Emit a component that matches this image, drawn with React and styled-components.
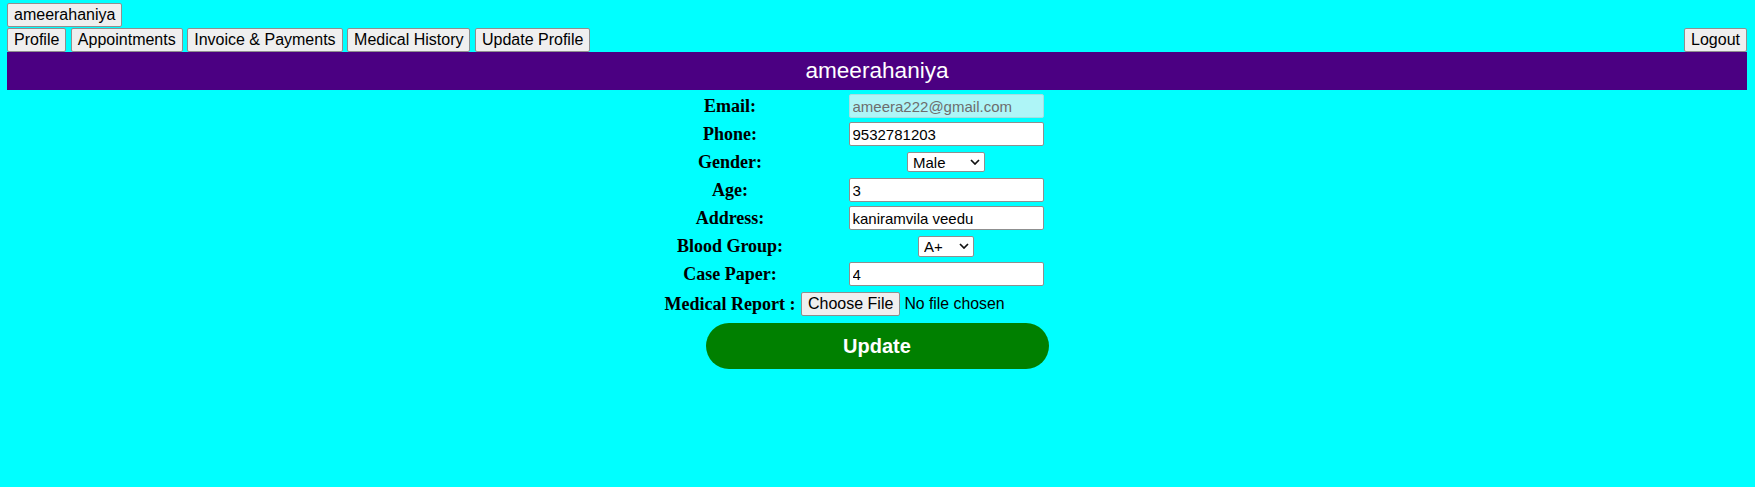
import React from "react";
import styled, { createGlobalStyle } from "styled-components";

const GlobalStyle = createGlobalStyle`
  html, body {
    margin: 0;
    background: #00ffff;
  }
  body {
    padding: 3px 8px 0 7px;
    min-height: 100vh;
    box-sizing: border-box;
    font-family: "Liberation Sans", Arial, sans-serif;
  }
  * { box-sizing: border-box; }
`;

const Page = styled.div`
  display: flex;
  flex-direction: column;
`;

const UserRow = styled.div`
  display: flex;
  margin-bottom: 1px;
`;

const NavRow = styled.div`
  display: flex;
  justify-content: space-between;
  align-items: flex-end;
`;

const NavGroup = styled.div`
  display: flex;
  gap: 4.5px;
`;

const NavButton = styled.button`
  height: 24px;
  padding: 0 6px;
  font-family: "Liberation Sans", Arial, sans-serif;
  font-size: 16px;
  color: #000;
  background: #efefef;
  border: 1px solid #8f8f8f;
  border-radius: 2px;
  cursor: pointer;
  line-height: 22px;
`;

const TitleBar = styled.div`
  height: 38px;
  background: #4b0082;
  color: #ffffff;
  font-size: 22.6px;
  display: flex;
  align-items: center;
  justify-content: center;
`;

const Form = styled.form`
  display: flex;
  flex-direction: column;
  align-items: center;
`;

const FieldGrid = styled.div`
  display: grid;
  grid-template-columns: 138px 294px;
  grid-template-rows: repeat(7, 26px) 30px;
  row-gap: 2px;
  justify-content: center;
  padding-top: 3px;
`;

const Label = styled.label`
  display: flex;
  align-items: center;
  justify-content: center;
  font-family: "Liberation Serif", "Times New Roman", serif;
  font-weight: bold;
  font-size: 18px;
  color: #000;
  white-space: nowrap;
`;

const Cell = styled.div`
  display: flex;
  align-items: center;
  justify-content: ${(p) => (p.$start ? "flex-start" : "center")};
  padding-left: ${(p) => (p.$start ? "2px" : "0")};
`;

const TextInput = styled.input`
  width: 195px;
  height: 24px;
  padding: 0 3px;
  font-family: "Liberation Sans", Arial, sans-serif;
  font-size: 15px;
  color: ${(p) => (p.disabled ? "#6d6d6d" : "#000")};
  background: ${(p) => (p.disabled ? "#aef5f7" : "#ffffff")};
  border: 1px solid ${(p) => (p.disabled ? "#a3dfe2" : "#8f8f8f")};
  border-radius: 2px;
  outline: none;
`;

const SelectWrap = styled.div`
  position: relative;
  display: inline-flex;
`;

const Select = styled.select`
  appearance: none;
  -webkit-appearance: none;
  width: ${(p) => p.$w}px;
  height: ${(p) => p.$h}px;
  padding: 0 0 0 5px;
  font-family: "Liberation Sans", Arial, sans-serif;
  font-size: 15px;
  color: #000;
  background: #ffffff;
  border: 1px solid #8f8f8f;
  border-radius: 2px;
  outline: none;
`;

const Chevron = styled.svg`
  position: absolute;
  right: 5px;
  top: 50%;
  transform: translateY(-50%);
  pointer-events: none;
`;

const FileBox = styled.div`
  display: flex;
  align-items: center;
  gap: 4px;
  font-family: "Liberation Sans", Arial, sans-serif;
  font-size: 15.8px;
  color: #000;
`;

const FileButton = styled.button`
  height: 24px;
  padding: 0 6px;
  font-family: "Liberation Sans", Arial, sans-serif;
  font-size: 16px;
  color: #000;
  background: #efefef;
  border: 1px solid #8f8f8f;
  border-radius: 2px;
`;

const UpdateButton = styled.button`
  margin-top: 4px;
  width: 343px;
  height: 46px;
  border: none;
  border-radius: 23px;
  background: #008000;
  color: #ffffff;
  font-family: "Liberation Sans", Arial, sans-serif;
  font-size: 20px;
  font-weight: bold;
  cursor: pointer;
`;

function DropDown({ value, options, w, h }) {
  return (
    <SelectWrap>
      <Select $w={w} $h={h} defaultValue={value}>
        {options.map((o) => (
          <option key={o}>{o}</option>
        ))}
      </Select>
      <Chevron width="10" height="6" viewBox="0 0 10 6">
        <path d="M1 1 L5 5 L9 1" fill="none" stroke="#111" strokeWidth="1.7" />
      </Chevron>
    </SelectWrap>
  );
}

const navItems = ["Profile", "Appointments", "Invoice & Payments", "Medical History", "Update Profile"];

export default function App() {
  return (
    <Page>
      <GlobalStyle />
      <UserRow>
        <NavButton>ameerahaniya</NavButton>
      </UserRow>
      <NavRow>
        <NavGroup>
          {navItems.map((n) => (
            <NavButton key={n}>{n}</NavButton>
          ))}
        </NavGroup>
        <NavButton>Logout</NavButton>
      </NavRow>
      <TitleBar>ameerahaniya</TitleBar>
      <Form onSubmit={(e) => e.preventDefault()}>
        <FieldGrid>
          <Label>Email:</Label>
          <Cell>
            <TextInput disabled defaultValue="ameera222@gmail.com" />
          </Cell>
          <Label>Phone:</Label>
          <Cell>
            <TextInput defaultValue="9532781203" />
          </Cell>
          <Label>Gender:</Label>
          <Cell>
            <DropDown value="Male" options={["Male", "Female", "Other"]} w={78} h={20} />
          </Cell>
          <Label>Age:</Label>
          <Cell>
            <TextInput defaultValue="3" />
          </Cell>
          <Label>Address:</Label>
          <Cell>
            <TextInput defaultValue="kaniramvila veedu" />
          </Cell>
          <Label>Blood Group:</Label>
          <Cell>
            <DropDown value="A+" options={["A+", "A-", "B+", "B-", "O+", "O-", "AB+", "AB-"]} w={56} h={21} />
          </Cell>
          <Label>Case Paper:</Label>
          <Cell>
            <TextInput defaultValue="4" />
          </Cell>
          <Label>Medical Report :</Label>
          <Cell $start>
            <FileBox>
              <FileButton type="button">Choose File</FileButton>
              <span>No file chosen</span>
            </FileBox>
          </Cell>
        </FieldGrid>
        <UpdateButton type="submit">Update</UpdateButton>
      </Form>
    </Page>
  );
}
